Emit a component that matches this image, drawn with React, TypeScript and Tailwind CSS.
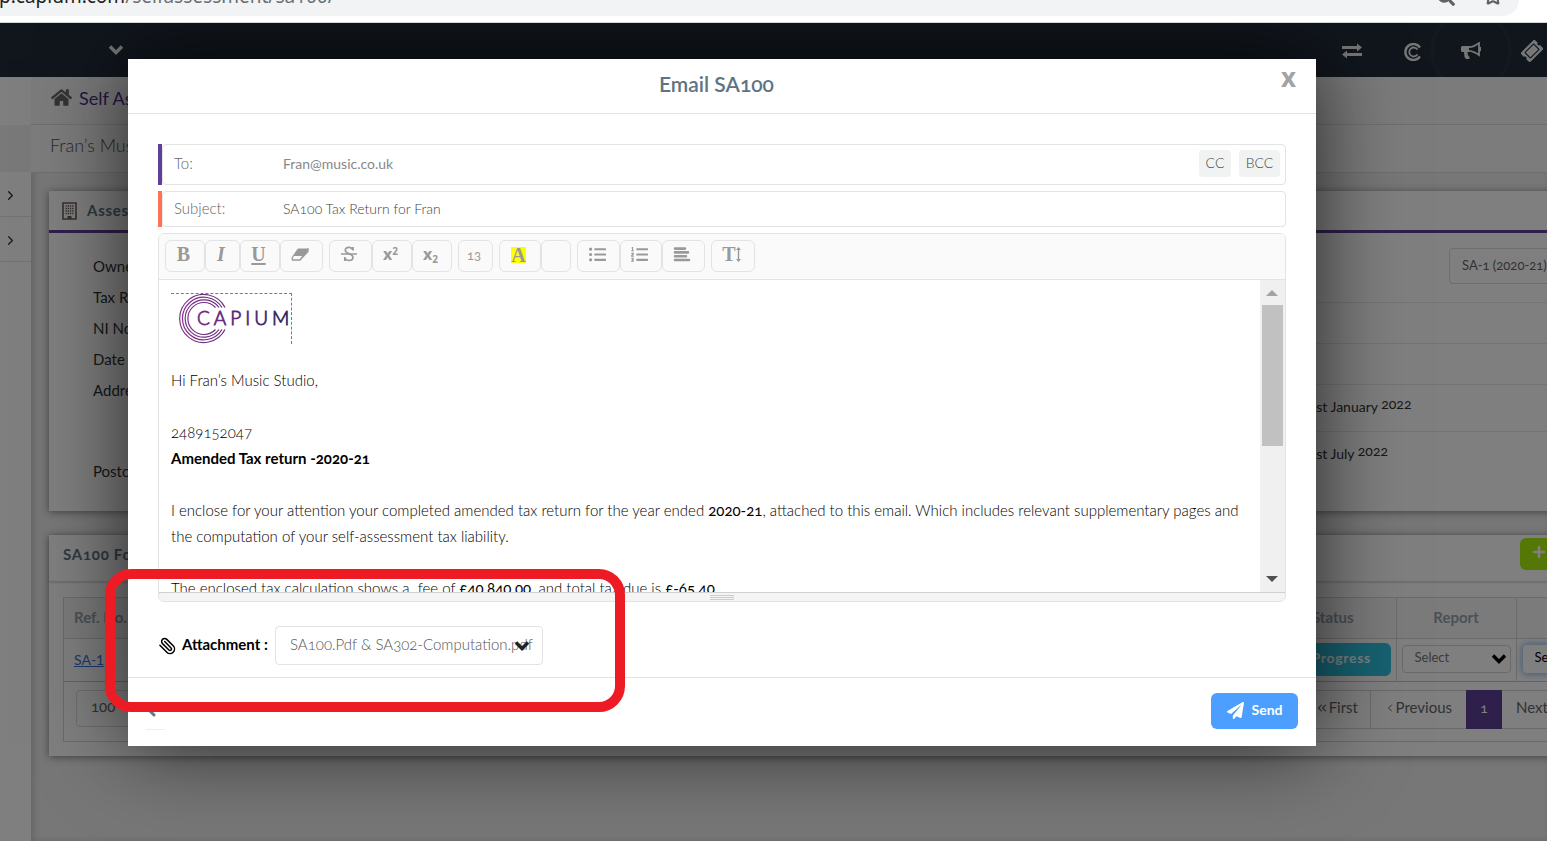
import type { ReactNode } from "react";
import { FaHome, FaListOl, FaListUl, FaPaperPlane, FaPlus, FaSearch, FaTicketAlt } from "react-icons/fa";
import { LuChevronLeft, LuChevronRight, LuChevronsLeft, LuPaperclip, LuStar } from "react-icons/lu";

const labels = ["Owner", "Tax Return", "NI No.", "Date of Birth", "Address"];

const ChevronDown = ({ className = "" }: { className?: string }) => (
  <svg className={className} width="16" height="12" viewBox="0 0 16 12" fill="none" stroke="currentColor">
    <path d="M2 2.500l6 6 6-6" strokeWidth="3.400" />
  </svg>
);

const BrowserBar = () => (
  <div className="border-b border-[#d5d5d5] bg-white pb-[6px]">
    <div className="mr-7 flex h-4 items-end justify-between overflow-hidden rounded-br-2xl bg-[#f1f3f4] pr-4">
      <p className="mb-2 -ml-px font-['Noto_Sans'] text-[19px] leading-6 whitespace-nowrap text-[#6b6f73]">
        <span className="text-[#202124]">p.capium.com</span>/selfassessment/sa100/
      </p>
      <div className="mb-2.5 flex items-end gap-7 text-[#5f6368]">
        <FaSearch size={18} />
        <LuStar size={20} strokeWidth={2.5} />
      </div>
    </div>
  </div>
);

const NavBar = () => (
  <nav className="flex h-[54px] items-center justify-between overflow-hidden bg-[#222c3a] pr-[5px] pl-[108px] text-[#eee]">
    <button type="button" aria-label="Switch client">
      <ChevronDown />
    </button>
    <div className="flex items-center pt-0.5">
      <a href="#switch" aria-label="Switch" className="mr-[42px]">
        <svg width="20" height="16" viewBox="0 0 20 16" fill="currentColor">
          <path d="M0 3h15V.500l5 4-5 4V6H0zM20 10H5V7.500l-5 4 5 4V13h15z" />
        </svg>
      </a>
      <a href="#capium" aria-label="Capium" className="mr-2 pt-0.5">
        <svg width="18" height="18" viewBox="0 0 18 18" fill="none" stroke="currentColor">
          <path d="M16 4.500A8 8 0 1 0 16 13.500" strokeWidth="2.400" />
          <path d="M13.500 6.500A4.500 4.500 0 1 0 13.500 11.500" strokeWidth="1.800" />
        </svg>
      </a>
      <a
        href="#news"
        aria-label="News"
        className="mr-2.5 flex size-[82px] items-center justify-center rounded-full border-4 border-[#28313f]"
      >
        <svg width="20" height="18" viewBox="0 0 20 18" fill="currentColor">
          <path d="M0 5.500C0 4.700.7 4 1.500 4H8v6H6.500l.3 2.500c.2 1 .7 1.700 1.600 2.300V17H5L3.500 15 3 10H1.500C.7 10 0 9.300 0 8.500z" />
          <path d="M8 5.200C11.500 5 15 3.200 18 1v12c-3-2.200-6.500-4-10-4.200" fill="none" stroke="currentColor" strokeWidth="1.800" />
          <path d="M18 4.500a2.500 2.500 0 0 1 0 5z" />
        </svg>
      </a>
      <a href="#tickets" aria-label="Tickets">
        <FaTicketAlt size={20} className="-rotate-45" />
      </a>
    </div>
  </nav>
);

const Sidebar = () => (
  <aside className="w-[31px] shrink-0 bg-white text-[#333]">
    <div className="h-12" />
    <div className="h-[47px] bg-[#f2f2f2]" />
    {["Clients", "Reports"].map((name) => (
      <button
        key={name}
        type="button"
        aria-label={name}
        className="flex h-[45px] w-full items-center border-b border-[#e4e4e4] pt-0.5 pl-[3px]"
      >
        <LuChevronRight size={15} />
      </button>
    ))}
  </aside>
);

const BuildingIcon = () => (
  <svg width="15" height="18" viewBox="0 0 15 18" fill="none" stroke="#6d5f58">
    <path d="M1 1h13v16H1z" strokeWidth="1.600" />
    <path d="M3.500 4h8M3.500 6.500h8M3.500 9h8M3.500 11.500h8" strokeWidth="1.400" strokeDasharray="1.400 0.800" />
    <path d="M5.500 15.500h4" strokeWidth="3" />
  </svg>
);

const SummaryCard = () => (
  <section className="-mr-5 ml-[18px] mt-[18px] bg-white shadow-[0_1px_8px_rgba(0,0,0,0.45)]">
    <h2 className="flex h-[42px] items-center gap-2.5 border-b-3 border-[#5f3f97] pl-[13px] text-[15px] font-bold tracking-wider text-[#5d7484]">
      <BuildingIcon />
      Assessment Summary
    </h2>
    <div className="flex h-[278px] justify-between text-[15px] text-[#333]">
      <dl className="pt-[18px] pl-11 leading-[31px]">
        {labels.map((label) => (
          <dt key={label}>{label}</dt>
        ))}
        <dt className="mt-[50px]">Postcode</dt>
      </dl>
      <div className="w-[267px]">
        <div className="flex h-[70px] items-center border-b border-[#e8e8e8] pb-1 pl-[149px]">
          <select
            aria-label="Tax return"
            className="h-9 w-40 appearance-none rounded border border-[#dadada] pl-3 text-[13px] oldstyle-nums text-[#666]"
          >
            <option>SA-1 (2020-21)</option>
          </select>
        </div>
        <div className="h-[41px] border-b border-[#e8e8e8]" />
        <div className="h-[41px] border-b border-[#e8e8e8]" />
        <p className="h-[47px] border-b border-[#e8e8e8] pt-2.5 text-sm leading-6">
          31st January <span className="relative bottom-[3px] oldstyle-nums">2022</span>
        </p>
        <p className="pt-2.5 text-sm leading-6">
          31st July <span className="relative bottom-[3px] oldstyle-nums">2022</span>
        </p>
      </div>
    </div>
  </section>
);

const FormsCard = () => (
  <section className="-mr-5 ml-[18px] mt-6 bg-white pb-3.5 shadow-[0_1px_8px_rgba(0,0,0,0.45)]">
    <div className="mb-[15px] flex h-[47px] items-start justify-between border-b border-[#dadada] pt-[3px] pl-3.5 shadow-sm">
      <h2 className="pt-1 text-[15px] leading-6 font-bold tracking-wider text-[#5d7484] oldstyle-nums">SA100 Form</h2>
      <button type="button" aria-label="Add" className="h-8 w-[47px] rounded-md bg-[#aaee0a] pb-1 pl-3 text-white">
        <FaPlus size={14} />
      </button>
    </div>
    <div className="ml-3.5 border-b border-l border-[#d4d4d4]">
      <table className="w-full table-fixed border-collapse text-[15px]">
        <thead>
          <tr className="h-[41px] border-y border-[#d4d4d4] bg-[#f6f6f6] text-[#98a2ac]">
            <th className="pb-0.5 pl-2.5 text-left">Ref. No.</th>
            <th className="w-[126px] border-r border-[#d4d4d4] pb-0.5">Status</th>
            <th className="w-[120px] border-r border-[#d4d4d4] pb-0.5">Report</th>
            <th className="w-[51px]" />
          </tr>
        </thead>
        <tbody>
          <tr className="h-[43px] border-b border-[#c4c4c4]">
            <td className="pb-0.5 pl-2.5">
              <a href="#sa-1" className="text-sm text-[#3f72d8] underline">SA-1</a>
            </td>
            <td className="border-r border-[#d4d4d4] pb-0.5">
              <button
                type="button"
                className="h-[33px] w-[121px] rounded-md bg-[#2ec4e2] pb-0.5 pl-1 text-sm font-bold tracking-wider text-white"
              >
                In Progress
              </button>
            </td>
            <td className="border-r border-[#d4d4d4] px-[5px] pb-0.5">
              <div className="relative">
                <select
                  aria-label="Report"
                  className="h-7 w-full appearance-none rounded border border-[#d4d4d4] pb-0.5 pl-3 text-[13px] text-[#777]"
                >
                  <option>Select</option>
                </select>
                <ChevronDown className="pointer-events-none absolute top-2 right-1 text-black" />
              </div>
            </td>
            <td className="pb-0.5 pl-1.5">
              <select
                aria-label="Action"
                className="h-7 w-24 appearance-none rounded bg-white pb-0.5 pl-3 text-[13px] text-black shadow-[0_0_6px_2px_#9cc4ee]"
              >
                <option>Select</option>
              </select>
            </td>
          </tr>
        </tbody>
      </table>
      <div className="flex h-[59px] items-start justify-between pt-2 text-[15px] text-[#666]">
        <select
          aria-label="Rows per page"
          className="ml-3 h-[37px] w-20 appearance-none rounded border border-[#dadada] pb-1 pl-3.5 text-[15px] oldstyle-nums"
        >
          <option>100</option>
        </select>
        <div className="flex h-[39px] items-stretch border-y border-[#d4d4d4]">
          <button type="button" className="flex w-[75px] items-center justify-end border-r border-[#d4d4d4] pr-3 pb-1">
            <LuChevronsLeft size={14} />
            First
          </button>
          <button type="button" className="flex w-[95px] items-center justify-end pr-3.5 pb-1">
            <LuChevronLeft size={12} />
            Previous
          </button>
          <button type="button" className="-my-px w-9 bg-[#5f3f97] pb-1 text-sm oldstyle-nums text-white">1</button>
          <button type="button" className="w-[65px] pb-1 pl-3.5 text-left">Next</button>
        </div>
      </div>
    </div>
  </section>
);

const CapiumLogo = () => (
  <div className="w-[121px] border-t border-r border-dashed border-[#e0468c]">
    <svg width="120" height="50" viewBox="0 1 120 50" role="img" aria-label="Capium">
      <defs>
        <linearGradient id="brand" gradientUnits="userSpaceOnUse" x1="8" y1="0" x2="120" y2="0">
          <stop offset="0" stopColor="#83338b" />
          <stop offset="0.500" stopColor="#5d2a78" />
          <stop offset="1" stopColor="#2b2c5e" />
        </linearGradient>
      </defs>
      <g fill="none" stroke="url(#brand)" strokeWidth="1.200">
        <path d="M54 14.500A24 24 0 1 0 54 36.500" />
        <path d="M51 14.500A21.300 21.300 0 1 0 51 36.500" />
        <path d="M48 14.500A18.700 18.700 0 1 0 48 36.500" />
        <path d="M44.500 14.500A16 16 0 1 0 44.500 36.500" />
      </g>
      <text
        x="26"
        y="32"
        fill="url(#brand)"
        stroke="url(#brand)"
        strokeWidth="0.800"
        className="font-[Lato] text-[19px] tracking-[4px]"
      >
        CAPIUM
      </text>
    </svg>
  </div>
);

const Tool = ({ label, width, children }: { label: string; width: string; children?: ReactNode }) => (
  <button
    type="button"
    aria-label={label}
    className={`flex h-8 items-center justify-center rounded-md border border-[#e3e3e3] pr-[3px] pb-1 ${width}`}
  >
    {children}
  </button>
);

const Toolbar = () => (
  <div className="flex gap-1.5 border-b border-[#e3e3e3] bg-[#fafafa] px-1.5 pt-1.5 pb-[7px] font-['Liberation_Serif'] text-xl leading-none font-bold text-[#999]">
    <div className="flex">
      <Tool label="Bold" width="w-10">B</Tool>
      <Tool label="Italic" width="w-[35px]"><i>I</i></Tool>
      <Tool label="Underline" width="w-10"><u className="underline-offset-2">U</u></Tool>
      <Tool label="Clear formatting" width="w-[43px]">
        <svg width="18" height="13" viewBox="0 0 18 13" fill="currentColor" stroke="currentColor">
          <path d="M7 1h10l-4.500 6.500h-10z" />
          <path d="M2.500 7.500L1 10.500l.5 1.500h7.500l3.500-4.500M12.500 7.500L17 1v2.500L9 12" fill="none" strokeWidth="1.300" />
        </svg>
      </Tool>
    </div>
    <div className="flex">
      <Tool label="Strikethrough" width="w-[43px]">
        <svg width="16" height="16" viewBox="0 0 16 16" fill="none" stroke="currentColor" strokeWidth="1.700">
          <path d="M12 1v3.500M12 4C11 2 9.500 1.300 8 1.300 5.500 1.300 4.300 2.800 4.300 4.300c0 4 7.700 3 7.700 7 0 2-1.700 3.200-4 3.200-2 0-3.500-1-4.200-2.700M3.800 15v-4" />
          <path d="M0 8h16" strokeWidth="1.300" />
        </svg>
      </Tool>
      <Tool label="Superscript" width="w-10">
        <span className="font-['Open_Sans'] text-base">x<sup className="text-[10px]">2</sup></span>
      </Tool>
      <Tool label="Subscript" width="w-10">
        <span className="font-['Open_Sans'] text-base">x<sub className="text-[10px]">2</sub></span>
      </Tool>
    </div>
    <Tool label="Font size" width="w-[35px]">
      <span className="pt-0.5 font-[Lato] text-[13px] font-normal oldstyle-nums">13</span>
    </Tool>
    <div className="flex">
      <Tool label="Text colour" width="w-[42px]">
        <span className="mt-0.5 h-4 bg-[#ff0] leading-4">A</span>
      </Tool>
      <Tool label="More colours" width="w-[30px]" />
    </div>
    <div className="flex">
      <Tool label="Bulleted list" width="w-[43px]"><FaListUl size={17} /></Tool>
      <Tool label="Numbered list" width="w-[42px]"><FaListOl size={17} /></Tool>
      <Tool label="Align" width="w-[43px]">
        <svg width="18" height="15" viewBox="0 0 18 15" stroke="currentColor" strokeWidth="2.600" strokeLinecap="round">
          <path d="M2 1.600h10M2 5.400h13M2 9.200h11M2 13h14" />
        </svg>
      </Tool>
    </div>
    <Tool label="Line height" width="w-11">
      <span>T</span>
      <svg width="5" height="15" viewBox="0 0 5 15" fill="currentColor">
        <path d="M2.500 0L5 3H3.200v9H5l-2.500 3L0 12h1.800V3H0z" />
      </svg>
    </Tool>
  </div>
);

const Message = () => (
  <div className="flex h-[312px]">
    <div className="flex-1 overflow-hidden pt-[13px] pr-3 pl-3 text-[15px] leading-[26px] font-light text-black oldstyle-nums">
      <CapiumLogo />
      <p className="mt-[23px]">Hi Fran’s Music Studio,</p>
      <p className="mt-[26px]">2489152047</p>
      <p className="font-bold">Amended Tax return -2020-21</p>
      <p className="mt-[26px]">
        I enclose for your attention your completed amended tax return for the year ended <b>2020-21</b>, attached to
        this email. Which includes relevant supplementary pages and the computation of your self-assessment tax
        liability.
      </p>
      <p className="mt-[26px]">
        The enclosed tax calculation shows a &nbsp;fee of <b>£40,840.00</b>, and total tax due is <b>£-65.40</b>
      </p>
    </div>
    <div className="flex w-[25px] flex-col bg-[#f0f0f0] py-2.5 pl-0.5">
      <svg className="ml-1" width="12" height="6" viewBox="0 0 12 6" fill="#a3a3a3"><path d="M0 6l6-6 6 6z" /></svg>
      <div className="mt-[9px] h-[141px] w-[21px] bg-[#c1c1c1]" />
      <svg className="mt-auto ml-1" width="12" height="6" viewBox="0 0 12 6" fill="#505050"><path d="M0 0h12L6 6z" /></svg>
    </div>
  </div>
);

const EmailDialog = () => (
  <div role="dialog" aria-label="Email SA100" className="bg-white shadow-[0_0_80px_rgba(0,0,0,0.7)]">
    <header className="flex h-[55px] items-start border-b border-[#e3e3e3] pr-5">
      <h1 className="flex-1 pt-[9px] pl-6 text-center text-[21px] leading-8 font-semibold text-[#5d7484] oldstyle-nums">
        Email SA100
      </h1>
      <button
        type="button"
        aria-label="Close"
        className="pt-0.5 font-['Noto_Sans'] text-[26px] leading-8 font-bold text-[#a3a3a3]"
      >
        x
      </button>
    </header>

    <div className="px-[30px] pt-[30px] pb-3 text-sm text-[#888]">
      <div className="mb-1.5 flex h-[41px] gap-px border-l-4 border-[#5f3f97]">
        <div className="flex flex-1 items-center gap-2 rounded border border-[#e3e3e3] pr-[5px] pb-0.5 pl-[11px]">
          <label htmlFor="to" className="w-[101px] text-[15px] font-light text-[#666]">To:</label>
          <input id="to" type="email" defaultValue="Fran@music.co.uk" className="flex-1 outline-none" />
          <button type="button" className="h-[27px] w-8 rounded-sm bg-[#f1f3f3] pb-0.5 font-light text-[#444]">CC</button>
          <button type="button" className="h-[27px] w-[41px] rounded-sm bg-[#f1f3f3] pb-0.5 font-light text-[#444]">BCC</button>
        </div>
      </div>
      <div className="mb-1.5 flex h-9 gap-px border-l-4 border-[#ff7354]">
        <div className="flex flex-1 items-center gap-2 rounded border border-[#e3e3e3] pl-[11px]">
          <label htmlFor="subject" className="w-[101px] text-[15px] font-light text-[#666]">Subject:</label>
          <input
            id="subject"
            type="text"
            defaultValue="SA100 Tax Return for Fran"
            className="flex-1 pb-px text-sm font-light text-[#444] oldstyle-nums outline-none"
          />
        </div>
      </div>

      <div className="overflow-hidden rounded-md border border-[#e3e3e3]">
        <Toolbar />
        <Message />
        <div className="flex h-[9px] flex-col items-center justify-center gap-px border-t border-[#d0d0d0] bg-[#f4f4f4]">
          <span className="h-px w-6 bg-[#ccc]" />
          <span className="h-px w-6 bg-[#ccc]" />
          <span className="h-px w-6 bg-[#ccc]" />
        </div>
      </div>

      <div className="mt-6 flex items-center">
        <LuPaperclip size={18} strokeWidth={2} className="mr-1.5 -scale-x-100 text-black" />
        <label htmlFor="attachment" className="w-[93px] pb-0.5 text-[15px] font-bold whitespace-nowrap text-black">
          Attachment :
        </label>
        <div className="relative">
          <select
            id="attachment"
            className="h-[39px] w-[268px] appearance-none rounded border border-[#e3e3e3] pb-0.5 pl-3.5 text-[15px] font-light text-[#555] oldstyle-nums"
          >
            <option>SA100.Pdf &amp; SA302-Computation.pdf</option>
          </select>
          <ChevronDown className="pointer-events-none absolute top-[14px] right-[13px] text-[#222]" />
        </div>
      </div>
    </div>

    <footer className="flex justify-between border-t border-[#e3e3e3] px-[18px] pt-[15px] pb-4">
      <div className="flex h-[37px] w-[19px] flex-col justify-end border-b border-[#eee] pb-3">
        <svg width="12" height="9" viewBox="0 0 12 9" stroke="#5d7b8c" strokeWidth="3" strokeLinecap="round">
          <path d="M2 1l6 6" />
        </svg>
      </div>
      <button
        type="button"
        className="flex h-9 w-[87px] items-center justify-center gap-2 rounded-md bg-[#4d9fff] pb-0.5 text-sm font-bold text-white"
      >
        <FaPaperPlane size={17} />
        Send
      </button>
    </footer>
  </div>
);

export default function App() {
  return (
    <div className="relative flex min-h-screen flex-col overflow-hidden bg-[#eee] font-[Lato,sans-serif]">
      <BrowserBar />
      <div className="relative flex flex-1 flex-col">
        <NavBar />
        <div className="flex flex-1">
          <Sidebar />
          <main className="min-w-0 flex-1 overflow-hidden bg-[#eee] shadow-[inset_3px_0_6px_rgba(0,0,0,0.15)]">
            <div className="flex h-12 items-center gap-[7px] border-b border-[#ddd] bg-[#f6f6f6] pb-1.5 pl-5 text-lg text-[#4a2e88]">
              <FaHome size={21} className="text-[#666]" />
              Self Assessment
            </div>
            <div className="flex h-12 items-center border-b border-[#ddd] bg-[#f8f8f8] pb-2 pl-[19px] text-lg font-light text-[#555]">
              Fran’s Music Studio
            </div>
            <SummaryCard />
            <FormsCard />
          </main>
        </div>
        <div className="absolute inset-0 overflow-hidden bg-black/50 pt-9 pr-[231px] pl-32">
          <EmailDialog />
        </div>
      </div>
      <div className="pointer-events-none absolute top-[569px] left-[105px] h-[143px] w-[520px] rounded-[26px] border-10 border-[#ed1c24]" />
    </div>
  );
}
